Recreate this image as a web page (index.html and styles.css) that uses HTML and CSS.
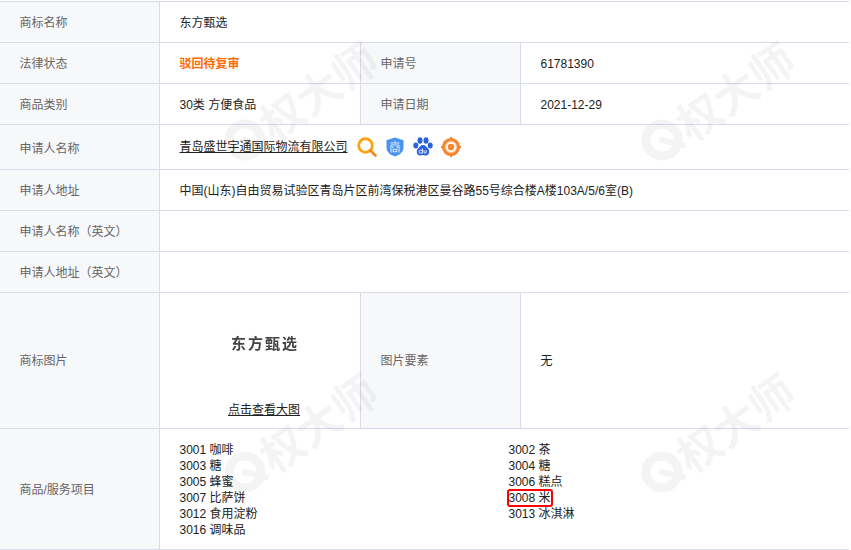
FILE: index.html
```html
<!DOCTYPE html>
<html lang="zh">
<head>
<meta charset="utf-8">
<title>商标详情</title>
<link rel="stylesheet" href="styles.css">
</head>
<body>
<div class="sheet">
  <table class="info">
    <colgroup>
      <col class="c1"><col class="c2"><col class="c3"><col class="c4">
    </colgroup>
    <tr class="r41">
      <th>商标名称</th>
      <td colspan="3">东方甄选</td>
    </tr>
    <tr class="r41">
      <th>法律状态</th>
      <td class="status">驳回待复审</td>
      <th>申请号</th>
      <td>61781390</td>
    </tr>
    <tr class="r41">
      <th>商品类别</th>
      <td>30类 方便食品</td>
      <th>申请日期</th>
      <td>2021-12-29</td>
    </tr>
    <tr class="r45">
      <th>申请人名称</th>
      <td colspan="3">
        <div class="applicant">
          <a class="link" href="#">青岛盛世宇通国际物流有限公司</a>
          <svg class="ic" viewBox="0 0 20 20"><circle cx="8.500" cy="8.500" r="6.800" fill="none" stroke="#fba30f" stroke-width="2.800"/><path d="M13.500 13.500l5 5" stroke="#f28c14" stroke-width="2.600" stroke-linecap="round"/></svg>
          <svg class="ic" viewBox="0 0 20 20"><path d="M10 .5l8.500 2.800v7.200c0 4.300-3.600 7.500-8.500 9-4.900-1.500-8.500-4.700-8.500-9V3.300z" fill="#4a94ee"/><path d="M5.500 6h9M10 4v2M6 8v7.500M14 8v7.500M6 8h8M8.200 9.300l-.8 1.700M11.800 9.300l.8 1.700M8.300 12.300h3.400v2.400H8.300z" fill="none" stroke="#d8e8fb" stroke-width="1.100"/></svg>
          <svg class="ic" viewBox="0 0 20 20"><g fill="#2a62dc"><ellipse cx="2.800" cy="8.500" rx="2.500" ry="3"/><ellipse cx="7" cy="3.500" rx="2.500" ry="3.300"/><ellipse cx="13" cy="3.500" rx="2.500" ry="3.300"/><ellipse cx="17.200" cy="8.500" rx="2.500" ry="3"/><path d="M10 8c2.500 0 3.300 2.200 5 3.600 2 1.700 1.700 7-2.200 7-1.200 0-1.700-.5-2.800-.5s-1.600.5-2.800.5c-3.900 0-4.200-5.300-2.200-7C6.700 10.200 7.500 8 10 8z"/></g><path d="M9.400 11.600v4.600H7.600a1.500 1.500 0 010-3h1.800M11 13.200v2c0 1.300 2.200 1.300 2.200 0v-2" fill="none" stroke="#fff" stroke-width=".9"/></svg>
          <svg class="ic" viewBox="0 0 20 20"><circle cx="10" cy="10" r="7.600" fill="#fbd3b0" stroke="#f5862e" stroke-width="3"/><circle cx="10" cy="10" r="4.800" fill="#fff"/><circle cx="10" cy="10" r="3.200" fill="#f5862e"/><path d="M10 0v3.500M10 16.500V20M0 10h3.500M16.500 10H20" stroke="#f5862e" stroke-width="2"/></svg>
        </div>
      </td>
    </tr>
    <tr class="r41">
      <th>申请人地址</th>
      <td colspan="3">中国(山东)自由贸易试验区青岛片区前湾保税港区曼谷路55号综合楼A楼103A/5/6室(B)</td>
    </tr>
    <tr class="r41">
      <th>申请人名称（英文）</th>
      <td colspan="3"></td>
    </tr>
    <tr class="r41">
      <th>申请人地址（英文）</th>
      <td colspan="3"></td>
    </tr>
    <tr class="r136">
      <th>商标图片</th>
      <td class="picture">
        <div class="logo">东方甄选</div>
        <a class="link" href="#">点击查看大图</a>
      </td>
      <th>图片要素</th>
      <td>无</td>
    </tr>
    <tr class="r121">
      <th>商品/服务项目</th>
      <td colspan="3" class="goods-cell">
        <ul class="goods">
          <li>3001 咖啡</li><li>3002 茶</li>
          <li>3003 糖</li><li>3004 糖</li>
          <li>3005 蜂蜜</li><li>3006 糕点</li>
          <li>3007 比萨饼</li><li><span class="hit">3008 米</span></li>
          <li>3012 食用淀粉</li><li>3013 冰淇淋</li>
          <li>3016 调味品</li>
        </ul>
      </td>
    </tr>
  </table>
  <div class="marks" aria-hidden="true">
    <div class="mark m1"><svg viewBox="0 0 44 44"><circle cx="22" cy="22" r="16" fill="none" stroke="#000" stroke-width="9"/><path d="M20 20l18 20" stroke="#000" stroke-width="6"/></svg><span>权大师</span></div>
    <div class="mark m2"><svg viewBox="0 0 44 44"><circle cx="22" cy="22" r="16" fill="none" stroke="#000" stroke-width="9"/><path d="M20 20l18 20" stroke="#000" stroke-width="6"/></svg><span>权大师</span></div>
    <div class="mark m3"><svg viewBox="0 0 44 44"><circle cx="22" cy="22" r="16" fill="none" stroke="#000" stroke-width="9"/><path d="M20 20l18 20" stroke="#000" stroke-width="6"/></svg><span>权大师</span></div>
    <div class="mark m4"><svg viewBox="0 0 44 44"><circle cx="22" cy="22" r="16" fill="none" stroke="#000" stroke-width="9"/><path d="M20 20l18 20" stroke="#000" stroke-width="6"/></svg><span>权大师</span></div>
  </div>
</div>
</body>
</html>
```
FILE: styles.css
```css
* { box-sizing: border-box; }
html, body { margin: 0; padding: 0; background: #fff; }
body {
  font-family: "Liberation Sans", "Noto Sans CJK SC", sans-serif;
  font-size: 12px;
  color: #333;
  overflow: hidden;
}
.sheet { position: relative; width: 849px; height: 550px; overflow: hidden; padding-top: 1px; }
.info { width: 850px; margin-left: -1px; border-collapse: collapse; table-layout: fixed; }
.c1 { width: 160px; }
.c2 { width: 201px; }
.c3 { width: 160px; }
.c4 { width: 329px; }
.info th, .info td {
  border: 1px solid #d9dce8;
  padding: 2px 20px 0 19.5px;
  text-align: left;
  font-weight: 400;
  line-height: 16px;
}
.info th { background: #f7f8fa; color: #666; padding-top: 2px; }
.info td { color: #222; }
.r41 { height: 41px; }
.r45 { height: 45px; }
.r136 { height: 136px; }
.r121 { height: 121px; }
.info .r45 th { padding-top: 4px; }
.info .r45 td { padding-top: 0; }
.info .r136 th, .info .r136 td { padding-top: 0; }
.info .r121 th { padding-top: 2px; }
.status { color: #ff6a00 !important; font-weight: 700 !important; }
.link { color: #222; text-decoration: underline; }
.applicant { display: flex; align-items: center; gap: 8px; }
.applicant .link { margin-right: 1px; }
.ic { width: 20px; height: 20px; flex: none; }
.info .picture { text-align: center; padding: 0 0 0 8px; vertical-align: top; }
.logo {
  margin-top: 40px;
  margin-bottom: 47px;
  padding-left: 2px;
  font-family: "Liberation Serif", "Noto Sans CJK SC", serif;
  font-size: 15px;
  line-height: 22px;
  font-weight: 700;
  letter-spacing: 2px;
  color: #444;
  filter: blur(.4px);
}
.info .goods-cell { padding-top: 2px; }
.goods {
  list-style: none;
  margin: 0;
  padding: 0;
  display: grid;
  grid-template-columns: 329px 1fr;
}
.goods li { line-height: 16px; height: 16px; }
.hit {
  display: inline-block;
  height: 14px;
  margin-top: 1px;
  line-height: 14px;
  vertical-align: top;
  outline: 2px solid #f00;
  border-radius: 1px;
}
.marks { position: absolute; inset: 0; pointer-events: none; }
.mark {
  position: absolute;
  display: flex;
  align-items: center;
  transform: rotate(-35deg);
  transform-origin: 22px 22px;
  opacity: .04;
  color: #000;
  font-family: "Noto Sans CJK SC", sans-serif;
  font-size: 44px;
  font-weight: 700;
  line-height: 44px;
  white-space: nowrap;
}
.mark svg { width: 44px; height: 44px; flex: none; }
.m1 { left: 223px; top: 118px; }
.m2 { left: 640px; top: 118px; }
.m3 { left: 223px; top: 450px; }
.m4 { left: 640px; top: 450px; }
```
